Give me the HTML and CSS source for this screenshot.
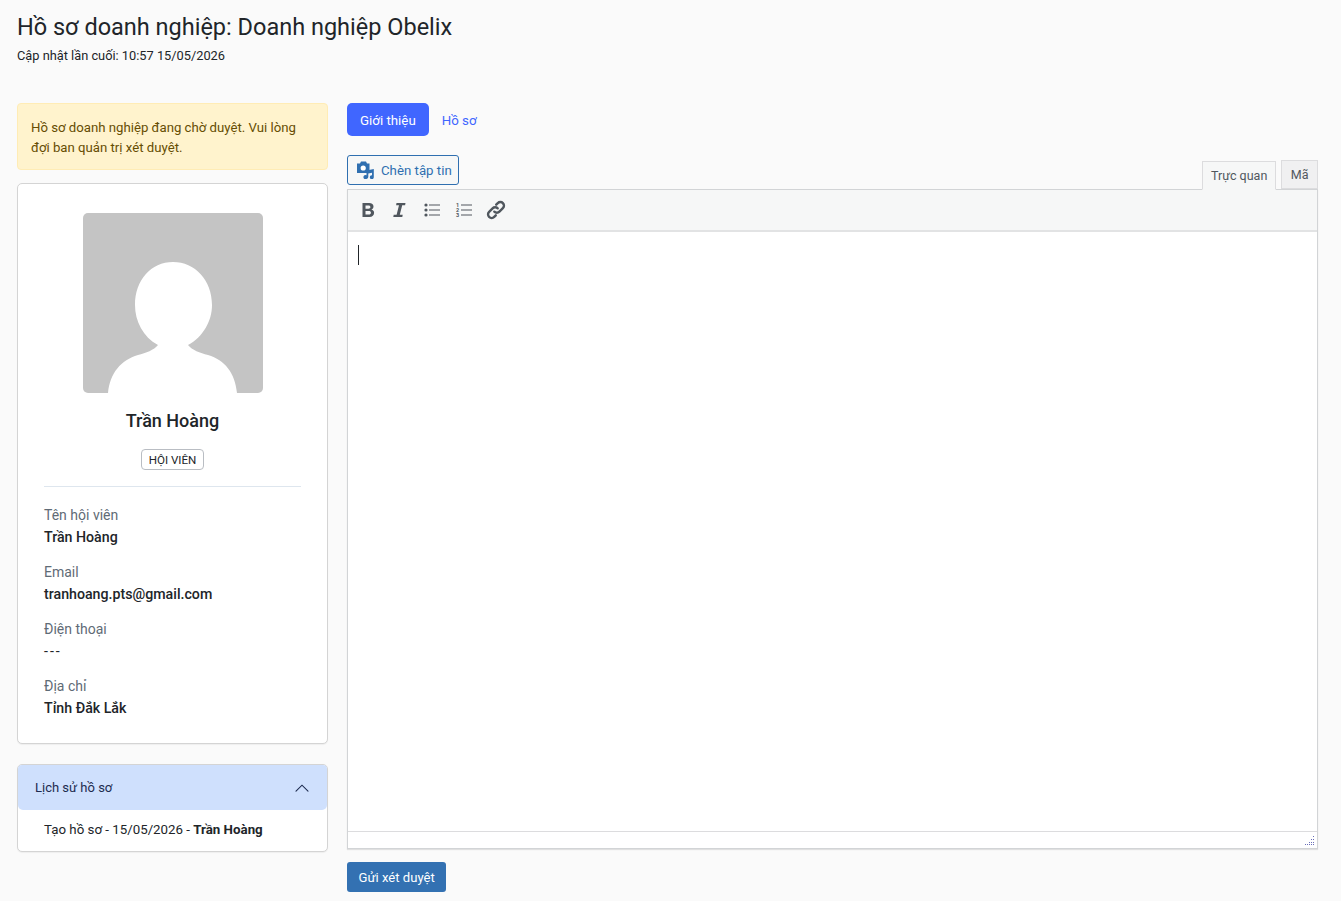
FILE: index.html
```html
<!DOCTYPE html>
<html lang="vi">
<head>
    <meta charset="UTF-8">
    <meta name="viewport" content="width=device-width, initial-scale=1.0">
    <title>Hồ sơ doanh nghiệp</title>
    <link rel="stylesheet" href="styles.css">
</head>
<body>
    <!-- Page header -->
    <header class="page-head">
        <h1 class="page-title">Hồ sơ doanh nghiệp: Doanh nghiệp Obelix</h1>
        <p class="page-sub">Cập nhật lần cuối: 10:57 15/05/2026</p>
    </header>

    <div class="layout">
        <!-- Left column -->
        <aside class="side">
            <div class="alert">Hồ sơ doanh nghiệp đang chờ duyệt. Vui lòng đợi ban quản trị xét duyệt.</div>

            <div class="card profile">
                <svg class="avatar" viewBox="0 0 180 180" aria-hidden="true">
                    <rect width="180" height="180" fill="#c4c4c4"/>
                    <path fill="#fff" d="M25 180C27 160 38 147 55 142C63 140 71 137 75 132C60 124 52 108 52 92C52 67 68 49 90 49C112 49 129 67 129 92C129 108 120 124 105 132C109 137 117 140 125 142C142 147 152 160 154 180Z"/>
                </svg>
                <h2 class="profile-name">Trần Hoàng</h2>
                <span class="role-badge">HỘI VIÊN</span>
                <hr class="divider">
                <div class="info-list">
                    <div class="info-item">
                        <div class="info-label">Tên hội viên</div>
                        <div class="info-value">Trần Hoàng</div>
                    </div>
                    <div class="info-item">
                        <div class="info-label">Email</div>
                        <div class="info-value">tranhoang.pts@gmail.com</div>
                    </div>
                    <div class="info-item">
                        <div class="info-label">Điện thoại</div>
                        <div class="info-value plain">---</div>
                    </div>
                    <div class="info-item">
                        <div class="info-label">Địa chỉ</div>
                        <div class="info-value">Tỉnh Đắk Lắk</div>
                    </div>
                </div>
            </div>

            <div class="card history">
                <div class="history-head">
                    <span>Lịch sử hồ sơ</span>
                    <svg class="chevron" viewBox="0 0 16 16" aria-hidden="true">
                        <path fill="none" stroke="currentColor" stroke-width="1.1" stroke-linecap="round" d="M2 11.2L8 5.2L14 11.2"/>
                    </svg>
                </div>
                <div class="history-body">Tạo hồ sơ - 15/05/2026 - <strong>Trần Hoàng</strong></div>
            </div>
        </aside>

        <!-- Right column -->
        <main class="main">
            <nav class="tabs">
                <a class="tab active">Giới thiệu</a>
                <a class="tab">Hồ sơ</a>
            </nav>

            <div class="editor-tools">
                <button class="media-btn">
                    <svg class="media-icon" viewBox="0 0 18 18" aria-hidden="true">
                        <path fill="currentColor" d="M0 2.500h3l1-2h5l1 2h2.500v9.500H0Z"/>
                        <circle cx="6.200" cy="7" r="2.600" fill="#fff"/>
                        <path fill="currentColor" d="M9.500 18a2.200 2.200 0 0 0 1.800-2V12.500l3.700-.8v2.500a2 2 0 1 0 1.800 1.900V8l-7.300 1.600v4.700A2.100 2.100 0 1 0 9.500 18Z"/>
                    </svg>
                    Chèn tập tin
                </button>
                <div class="mode-tabs">
                    <span class="mode-tab current">Trực quan</span>
                    <span class="mode-tab">Mã</span>
                </div>
            </div>

            <div class="editor">
                <div class="toolbar">
                    <svg class="tool" viewBox="0 0 20 20" aria-hidden="true">
                        <path fill="#50575e" fill-rule="evenodd" d="M4.500 3h6.700c2.700 0 4.300 1.300 4.300 3.500 0 1.500-.8 2.600-2.100 3 1.700.4 2.700 1.600 2.700 3.300 0 2.500-1.800 4.200-4.700 4.200H4.500ZM7.500 5.400v3.300h2.900c1.300 0 2-.6 2-1.700s-.7-1.600-2-1.600ZM7.500 11v3.600h3.300c1.400 0 2.100-.6 2.100-1.800s-.7-1.800-2.100-1.800Z"/>
                    </svg>
                    <svg class="tool" viewBox="0 0 20 20" aria-hidden="true">
                        <path fill="#50575e" d="M6.500 3h9l-.4 2.200h-2.900l-2.400 9.600h2.900l-.4 2.200h-9l.4-2.200h2.900l2.400-9.600H6.100Z"/>
                    </svg>
                    <svg class="tool" viewBox="0 0 20 20" aria-hidden="true">
                        <g fill="#50575e">
                            <circle cx="4" cy="5" r="1.600"/>
                            <circle cx="4" cy="10" r="1.600"/>
                            <circle cx="4" cy="15" r="1.600"/>
                            <rect x="7" y="4.500" width="11" height="1"/>
                            <rect x="7" y="9.500" width="11" height="1"/>
                            <rect x="7" y="14.500" width="11" height="1"/>
                        </g>
                    </svg>
                    <svg class="tool" viewBox="0 0 20 20" aria-hidden="true">
                        <g fill="#50575e">
                            <text class="tool-num" x="2" y="7">1</text>
                            <text class="tool-num" x="2" y="12">2</text>
                            <text class="tool-num" x="2" y="17">3</text>
                            <rect x="7" y="4.500" width="11" height="1"/>
                            <rect x="7" y="9.500" width="11" height="1"/>
                            <rect x="7" y="14.500" width="11" height="1"/>
                        </g>
                    </svg>
                    <svg class="tool" viewBox="0 0 20 20" aria-hidden="true">
                        <g fill="none" stroke="#50575e" stroke-width="2.400" stroke-linecap="round">
                            <path d="M8.300 11.700a3.600 3.600 0 0 0 5.100 0l3.500-3.500a3.600 3.600 0 0 0-5.100-5.100l-1.600 1.600"/>
                            <path d="M11.700 8.300a3.600 3.600 0 0 0-5.100 0l-3.500 3.500a3.600 3.600 0 0 0 5.100 5.100l1.600-1.600"/>
                        </g>
                    </svg>
                </div>
                <div class="editor-body"><span class="caret"></span></div>
                <div class="statusbar">
                    <svg class="grip" viewBox="0 0 10 10" aria-hidden="true">
                        <g fill="#6a6fb8">
                            <rect x="8" y="0" width="1" height="1"/>
                            <rect x="6" y="3" width="1" height="1"/><rect x="8" y="3" width="1" height="1"/>
                            <rect x="4" y="6" width="1" height="1"/><rect x="6" y="6" width="1" height="1"/><rect x="8" y="6" width="1" height="1"/>
                            <rect x="0" y="8" width="1" height="1"/><rect x="2" y="8" width="1" height="1"/><rect x="4" y="8" width="1" height="1"/><rect x="6" y="8" width="1" height="1"/><rect x="8" y="8" width="1" height="1"/>
                        </g>
                    </svg>
                </div>
            </div>

            <button class="submit-btn">Gửi xét duyệt</button>
        </main>
    </div>
</body>
</html>
```

FILE: styles.css
```css
* {
    box-sizing: border-box;
}

body {
    margin: 0;
    padding: 12px 23px 9px 17px;
    background-color: #fafafa;
    color: #212529;
    font-family: Roboto, "Noto Sans", sans-serif;
    font-size: 14px;
    line-height: 20px;
}

.page-head {
    height: 91px;
}

.page-title {
    margin: 0;
    font-size: 23.5px;
    font-weight: 400;
    line-height: 30px;
}

.page-sub {
    margin: 4px 0 0;
    font-size: 12.8px;
    line-height: 20px;
}

.layout {
    display: flex;
    gap: 19px;
}

/* Left column */
.side {
    width: 311px;
    flex-shrink: 0;
}

.alert {
    height: 67px;
    padding: 14px 13px;
    background-color: #fff3cd;
    border: 1px solid #ffecb5;
    border-radius: 4px;
    color: #664d03;
    font-size: 13.2px;
}

.card {
    background-color: #fff;
    border: 1px solid #d4d4d4;
    border-radius: 5px;
    box-shadow: 0 1px 1px rgba(0, 0, 0, 0.05);
}

.profile {
    height: 561px;
    margin-top: 13px;
    padding: 29px 26px 0;
    display: flex;
    flex-direction: column;
    align-items: center;
}

.avatar {
    width: 180px;
    height: 180px;
    border-radius: 5px;
}

.profile-name {
    margin: 16px 0 0;
    font-size: 18px;
    font-weight: 500;
    line-height: 24px;
}

.role-badge {
    margin-top: 16px;
    padding: 0 7px;
    height: 21px;
    border: 1px solid #b9bdc3;
    border-radius: 4px;
    font-size: 11.6px;
    line-height: 20px;
}

.divider {
    width: 100%;
    margin: 16px 0 0;
    border: 0;
    border-top: 1px solid #dee6ee;
}

.info-list {
    width: 100%;
    margin-top: 18px;
}

.info-item {
    margin-bottom: 14px;
}

.info-label {
    color: #5f6b76;
    font-size: 14px;
    line-height: 21px;
}

.info-value {
    margin-top: 1px;
    font-size: 14.2px;
    font-weight: 500;
    line-height: 21px;
}

.info-value.plain {
    font-weight: 400;
    letter-spacing: 2px;
}

.history {
    margin-top: 20px;
    height: 88px;
    overflow: hidden;
}

.history-head {
    height: 45px;
    padding: 0 17px;
    display: flex;
    align-items: center;
    justify-content: space-between;
    background-color: #cfe0fd;
    border-radius: 0 0 5px 5px;
    color: #1d2b4f;
    font-size: 13px;
}

.chevron {
    width: 16px;
    height: 16px;
}

.history-body {
    padding: 10px 26px;
    font-size: 13.3px;
}

.history-body strong {
    font-weight: 700;
}

/* Right column */
.main {
    flex: 1;
    min-width: 0;
}

.tabs {
    display: flex;
    gap: 0;
}

.tab {
    height: 33px;
    padding: 0 13px;
    border-radius: 5px;
    color: #3f66ff;
    font-size: 13.3px;
    line-height: 35px;
}

.tab.active {
    background-color: #4066ff;
    color: #fff;
}

.editor-tools {
    height: 34px;
    margin-top: 19px;
    display: flex;
    justify-content: space-between;
}

.media-btn {
    height: 30px;
    padding: 0 6px 0 9px;
    display: flex;
    align-items: center;
    gap: 6px;
    background-color: #f6f7f7;
    border: 1px solid #2f6fb0;
    border-radius: 3px;
    color: #2f6fb0;
    font-family: inherit;
    font-size: 13.25px;
}

.media-icon {
    width: 18px;
    height: 18px;
}

.mode-tabs {
    display: flex;
    align-items: flex-end;
    gap: 5px;
    margin-top: 6px;
}

.mode-tab {
    position: relative;
    height: 29px;
    padding: 0 8.5px;
    background-color: #f0f0f1;
    border: 1px solid #dcdcde;
    color: #50575e;
    font-size: 12.5px;
    line-height: 27px;
}

.mode-tab.current {
    height: 29px;
    padding: 0 8px;
    background-color: #f6f7f7;
    border-bottom-color: #f6f7f7;
    margin-bottom: -1px;
    z-index: 1;
}

.editor {
    height: 660px;
    display: flex;
    flex-direction: column;
    background-color: #fff;
    border: 1px solid #d2d4d6;
    box-shadow: 0 1px 1px rgba(0, 0, 0, 0.1);
}

.toolbar {
    height: 42px;
    padding: 0 10px;
    display: flex;
    align-items: center;
    gap: 12px;
    background-color: #f6f7f7;
    border-bottom: 2px solid #e2e3e4;
}

.tool {
    width: 20px;
    height: 20px;
}

.tool-num {
    font-size: 5.5px;
    font-weight: 700;
}

.editor-body {
    flex: 1;
    padding: 13px 10px;
}

.caret {
    display: block;
    width: 1px;
    height: 20px;
    background-color: #212529;
}

.statusbar {
    height: 17px;
    display: flex;
    justify-content: flex-end;
    align-items: flex-end;
    padding: 0 2px 2px 0;
    border-top: 1px solid #dcdcde;
}

.grip {
    width: 10px;
    height: 10px;
}

.submit-btn {
    display: block;
    height: 30px;
    margin-top: 13px;
    padding: 0 11.5px;
    background-color: #3371b2;
    border: 0;
    border-radius: 3px;
    color: #fff;
    font-family: inherit;
    font-size: 13.1px;
}
```
